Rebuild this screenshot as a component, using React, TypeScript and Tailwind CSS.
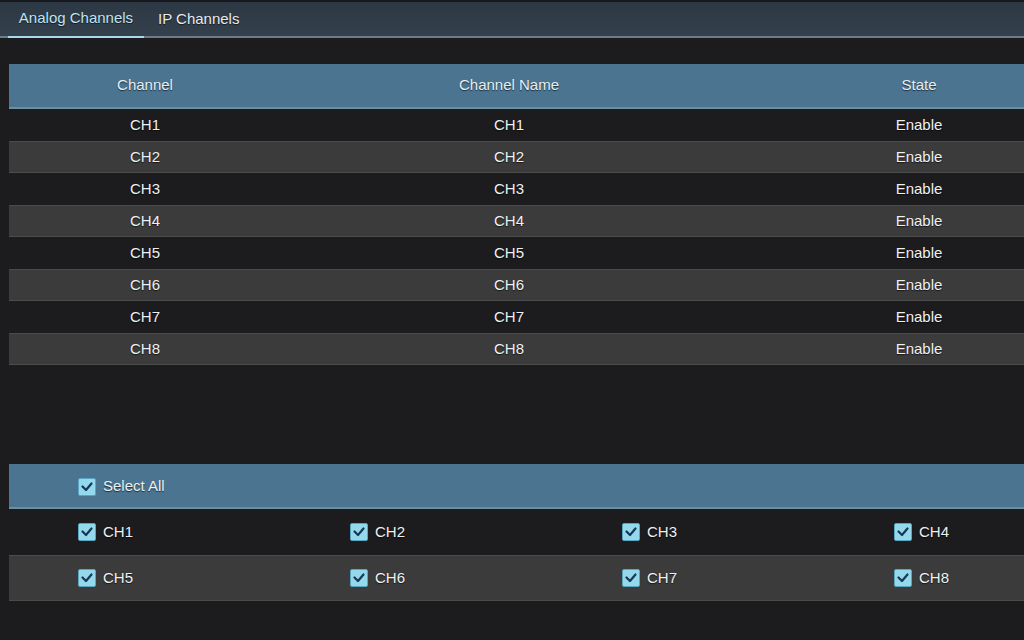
import React from 'react';

const channels = ['CH1', 'CH2', 'CH3', 'CH4', 'CH5', 'CH6', 'CH7', 'CH8'];

const CheckBox = () => (
    <span className="flex h-[18px] w-[18px] items-center justify-center rounded-[2px] border border-[#5aa6c0] bg-[#93d9ee]">
        <svg width="12" height="10" viewBox="0 0 12 10">
            <path d="M1.5 4.5 L5 8 L10.5 1.5" fill="none" stroke="#1c3650" strokeWidth="2.2" strokeLinecap="round" strokeLinejoin="round" />
        </svg>
    </span>
);

const CheckItem = ({ label }: { label: string }) => (
    <div className="flex items-center gap-[7px]">
        <CheckBox />
        <span>{label}</span>
    </div>
);

export default function App() {
    return (
        <div
            className="h-[640px] w-[1024px] overflow-hidden bg-[#1c1b1d] text-[15px] text-[#eef1f3]"
            style={{ fontFamily: '"Liberation Sans", Arial, sans-serif', textShadow: '0 1px 1px rgba(0,0,0,0.6)' }}
        >
            {/* tabs */}
            <div className="h-[2px] bg-[#161a1e]" />
            <div className="flex h-[36px] items-end border-b-2 border-[#6b7c8a] bg-gradient-to-b from-[#2c3843] to-[#34414d] pl-[8px]">
                <div className="-mb-[2px] flex h-full w-[136px] items-center justify-center border-b-2 border-[#a9d8ec] pb-[4px] text-[#bfe3f3]">
                    Analog Channels
                </div>
                <div className="flex h-full items-center pl-[14px] pt-[1px] text-[#e6ebef]">IP Channels</div>
            </div>

            {/* channel table */}
            <div className="ml-[9px] mt-[26px] w-[1100px]">
                <div className="flex h-[45px] items-center border-b-2 border-[#6e8ea3] bg-[#4a7490] text-[#e8eef2]">
                    <div className="w-[272px] text-center">Channel</div>
                    <div className="w-[456px] text-center">Channel Name</div>
                    <div className="w-[364px] text-center">State</div>
                </div>
                {channels.map((ch, i) => (
                    <div
                        key={ch}
                        className={
                            i % 2 === 0
                                ? 'flex h-[32px] items-center bg-[#1c1b1d]'
                                : 'flex h-[32px] items-center border-y border-[#4b4b4b] bg-[#3b3b3b]'
                        }
                    >
                        <div className="w-[272px] text-center">{ch}</div>
                        <div className="w-[456px] text-center">{ch}</div>
                        <div className="w-[364px] text-center">Enable</div>
                    </div>
                ))}
            </div>

            {/* selection */}
            <div className="ml-[9px] mt-[99px] w-[1100px]">
                <div className="flex h-[45px] items-center border-b-2 border-[#6e8ea3] bg-[#4a7490] pl-[69px] pt-[2px]">
                    <CheckItem label="Select All" />
                </div>
                <div className="grid h-[46px] grid-cols-[272px_272px_272px_272px] items-center pl-[69px]">
                    {channels.slice(0, 4).map((ch) => (
                        <CheckItem key={ch} label={ch} />
                    ))}
                </div>
                <div className="grid h-[46px] grid-cols-[272px_272px_272px_272px] items-center border-y border-[#4b4b4b] bg-[#3b3b3b] pl-[69px]">
                    {channels.slice(4).map((ch) => (
                        <CheckItem key={ch} label={ch} />
                    ))}
                </div>
            </div>
        </div>
    );
}
